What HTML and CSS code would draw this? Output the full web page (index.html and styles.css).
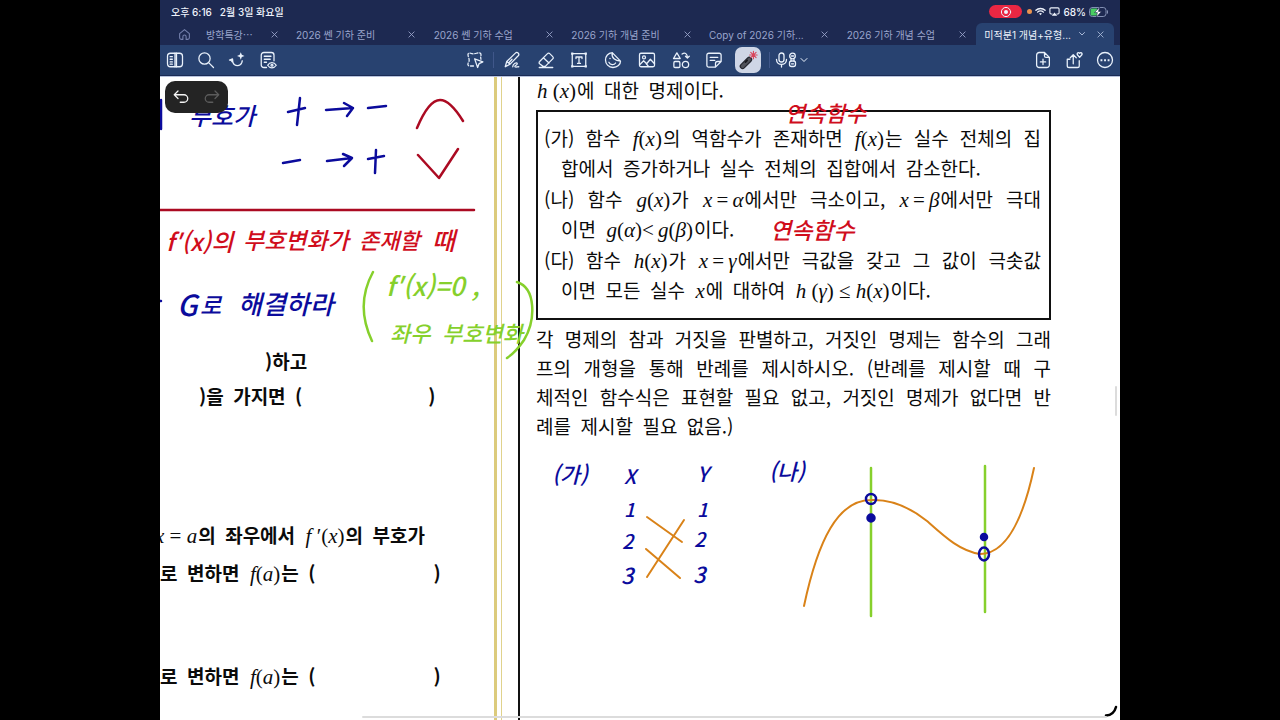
FILE: index.html
```html
<!DOCTYPE html>
<html lang="ko">
<head>
<meta charset="utf-8">
<meta name="viewport" content="width=device-width, initial-scale=1">
<title>미적분1 개념+유형</title>
<link rel="stylesheet" href="styles.css">
</head>
<body>
<div class="device">
  <header class="top">
    <div class="status">
      <span>오후 6:16</span><span>2월 3일 화요일</span>
      <div class="status-right">
        <span class="record"><svg viewBox="0 0 12 12"><circle cx="6" cy="6" r="4.6"/><circle class="solid" cx="6" cy="6" r="2"/></svg></span>
        <span class="mic-dot"></span>
        <svg class="wifi" viewBox="0 0 12 10"><path d="M1 3.6a7.2 7.2 0 0 1 10 0M2.8 5.6a4.6 4.6 0 0 1 6.4 0"/><path class="solid" d="M4.4 7.2a2.4 2.4 0 0 1 3.2 0L6 9z"/></svg>
        <svg class="airplay" viewBox="0 0 12 10"><path d="M3.4 7.6H2.2A1.2 1.2 0 0 1 1 6.400V2.200A1.200 1.200 0 0 1 2.200 1h7.600A1.200 1.200 0 0 1 11 2.200v4.200a1.200 1.200 0 0 1-1.200 1.200H8.600"/><path class="solid" d="M6 6l3 3.500H3z"/></svg>
        <span>68%</span>
        <svg class="battery" viewBox="0 0 20 10"><rect x=".5" y=".5" width="16.500" height="9" rx="2.800"/><path class="charge" d="M3 1.500h5V8.500H3A1.500 1.500 0 0 1 1.500 7V3A1.500 1.500 0 0 1 3 1.500z"/><path d="M18.500 3.800v2.400"/><path class="bolt" d="M10.600 0L5.500 5.600h2.800L7.500 10l5-5.600H9.700z"/></svg>
      </div>
    </div>
    <nav class="tabs">
      <button class="home" aria-label="홈"><svg class="icon" viewBox="0 0 24 24"><path d="M3 10.500L12 3l9 7.500V18a3 3 0 0 1-3 3h-3v-5a3 3 0 0 0-6 0v5H6a3 3 0 0 1-3-3z"/></svg></button>
      <div class="tab first"><a href="#">방학특강⋯</a><button aria-label="닫기"><svg viewBox="0 0 8 8"><path d="M1 1l6 6M7 1L1 7"/></svg></button></div>
      <div class="tab"><a href="#">2026 쎈 기하 준비</a><button aria-label="닫기"><svg viewBox="0 0 8 8"><path d="M1 1l6 6M7 1L1 7"/></svg></button></div>
      <div class="tab"><a href="#">2026 쎈 기하 수업</a><button aria-label="닫기"><svg viewBox="0 0 8 8"><path d="M1 1l6 6M7 1L1 7"/></svg></button></div>
      <div class="tab"><a href="#">2026 기하 개념 준비</a><button aria-label="닫기"><svg viewBox="0 0 8 8"><path d="M1 1l6 6M7 1L1 7"/></svg></button></div>
      <div class="tab"><a href="#">Copy of 2026 기하...</a><button aria-label="닫기"><svg viewBox="0 0 8 8"><path d="M1 1l6 6M7 1L1 7"/></svg></button></div>
      <div class="tab"><a href="#">2026 기하 개념 수업</a><button aria-label="닫기"><svg viewBox="0 0 8 8"><path d="M1 1l6 6M7 1L1 7"/></svg></button></div>
      <div class="tab active"><a href="#">미적분1 개념+유형...</a><svg class="chev" viewBox="0 0 8 8"><path d="M1.500 2.500L4 5l2.500-2.500"/></svg><button aria-label="닫기"><svg viewBox="0 0 8 8"><path d="M1 1l6 6M7 1L1 7"/></svg></button></div>
    </nav>
  </header>

  <div class="toolbar">
    <div class="side">
      <button aria-label="사이드바"><svg class="icon" viewBox="0 0 24 24"><rect x="2" y="3" width="20" height="18" rx="4"/><path d="M12 3v18M5.500 7.500h3M5.500 11h3M5.500 14.500h3M5.500 17.500h3M14 3v18"/></svg></button>
      <button aria-label="검색"><svg class="icon" viewBox="0 0 24 24"><circle cx="10" cy="10" r="7.500"/><path d="M15.500 15.500L22 22"/></svg></button>
      <button aria-label="AI"><svg class="icon" viewBox="0 0 24 24"><path d="M2 12l4-1.500L6.500 15c2 6 10 6 12 0l.5-2M2.500 12c1 0 2.500 1 3 2.500"/><path class="fill" d="M17 1.500l1.400 3.600L22 6.500l-3.600 1.400L17 11.500l-1.400-3.600L12 6.500l3.600-1.400z"/></svg></button>
      <button aria-label="페이지 보기"><svg class="icon" viewBox="0 0 24 24"><path d="M10 22H6.500A3.500 3.500 0 0 1 3 18.500v-13A3.500 3.500 0 0 1 6.500 2h10A3.500 3.500 0 0 1 20 5.500V13M7 7h9M7 11h8M7 15h3"/><path d="M11.500 19c3-4.500 8.500-4.500 11.500 0-3 4.500-8.500 4.500-11.500 0z"/><circle cx="17.300" cy="19" r="1.300"/></svg></button>
    </div>
    <div class="center">
      <button aria-label="선택"><svg class="icon" viewBox="0 0 24 24"><path stroke-dasharray="4 2.500" d="M10 20H5c-3 0-3-3-1.500-5S4 10 3 7s0-5 3-4 5 1 8 0 6-1 6 2-1 3 0 6"/><path d="M11.500 10.500l11 4-5 2.300-2 5.200z"/></svg></button>
      <i class="divider"></i>
      <div class="tools">
        <button aria-label="펜"><svg class="icon" viewBox="0 0 24 24"><path d="M3 21l2-7L16.500 2.800a2.500 2.500 0 0 1 3.800 3.500L9.500 17.500zM5 14l4.500 3.500M7.500 16L12 11M13 21c0-4 6-7 6-4 0 2-4 2-3 4 1 1 3 0 5 0"/></svg></button>
        <button aria-label="지우개"><svg class="icon" viewBox="0 0 24 24"><path d="M3.500 14L14 3.500a2 2 0 0 1 3 0L21 7.500a2 2 0 0 1 0 3L11 20.500H8L3.500 17a2 2 0 0 1 0-3zM8.500 9l7.500 7M3 22h18"/></svg></button>
        <button aria-label="텍스트"><svg class="icon" viewBox="0 0 24 24"><rect x="3" y="3.500" width="18" height="17"/><path d="M8 10V8h8v2M12 8v8.500M10 16.500h4"/><path class="fill" d="M1.500 2h3v3h-3zM19.500 2h3v3h-3zM1.500 19h3v3h-3zM19.500 19h3v3h-3z"/></svg></button>
        <button aria-label="스티커"><svg class="icon" viewBox="0 0 24 24"><path d="M11 2.100C5.500 2.600 2 7 2 12s4 10 10 10 10-4 10-8.500L11 2.100zM11 2.100c-1.500 7 4 11.400 11 11.400M6.500 15c2 4 7 4 9 1"/><circle class="fill" cx="8" cy="10" r="1"/></svg></button>
        <button aria-label="사진"><svg class="icon" viewBox="0 0 24 24"><rect x="2" y="3" width="20" height="18" rx="2"/><circle cx="8" cy="8.500" r="2"/><path d="M2.500 18l5-5 4 4 5-6 5.500 6M11 17l3 3.500"/></svg></button>
        <button aria-label="도형"><svg class="icon" viewBox="0 0 24 24"><path d="M6.500 2.500L11 10H2zM13.500 4c4-3 7 0 7 5M18 7l2.500 2.500L23 7"/><rect x="2.500" y="14" width="8" height="8" rx="1.500"/><circle cx="18" cy="18" r="4.200"/></svg></button>
        <button aria-label="메모"><svg class="icon" viewBox="0 0 24 24"><path d="M5 3h14a2.500 2.500 0 0 1 2.500 2.500V14L14 21.500H5A2.500 2.500 0 0 1 2.500 19V5.500A2.500 2.500 0 0 1 5 3zM21.500 14H16.500a2.500 2.500 0 0 0-2.500 2.500v5M7 8.500h10M7 12.500h6"/></svg></button>
        <button class="on" aria-label="레이저 포인터"><svg class="laser" viewBox="0 0 24 24"><path class="body" d="M5.500 19.500l8-8"/><path class="body-in" d="M5.500 19.500l8-8"/><path class="shine" d="M9 14.500l2-2"/><path class="spark" d="M18.500 1.500v9M14 6h9M15.300 2.800l6.400 6.400M21.700 2.800l-6.400 6.400"/></svg></button>
      </div>
      <i class="divider wide"></i>
      <button class="mic" aria-label="녹음">
        <svg viewBox="0 0 24 16"><rect x="4" y="1" width="5" height="9" rx="2.500"/><path d="M1.500 7.500c0 6.500 10 6.500 10 0M6.500 12.500V15"/><circle cx="17.500" cy="4" r="2.800"/><rect x="14.500" y="9" width="6" height="5.500" rx="2"/><path d="M16 9V7.500M19 9V7.500M16.500 4h2M16.500 11.800h2"/></svg>
        <svg class="chev" viewBox="0 0 8 8"><path d="M1 2.500L4 5.500l3-3"/></svg>
      </button>
    </div>
    <div class="side end">
      <button aria-label="페이지 추가"><svg class="icon" viewBox="0 0 24 24"><path d="M14 2H7a3.500 3.500 0 0 0-3.500 3.500v13A3.500 3.500 0 0 0 7 22h10a3.500 3.500 0 0 0 3.500-3.500V8.500zM14 2v4.500a2 2 0 0 0 2 2h4.500M12 11v7M8.500 14.500h7"/></svg></button>
      <button aria-label="공유"><svg class="icon" viewBox="0 0 24 24"><path d="M6.500 11H3v8.500A2.500 2.500 0 0 0 5.500 22h11a2.500 2.500 0 0 0 2.500-2.500V13M11 17V5.500M7 9l4-4 4 4"/><path d="M19.500 8.500L16.500 5c-1-2 1.500-4 3-2 1.500-2 4 0 3 2z"/></svg></button>
      <button aria-label="더 보기"><svg class="icon" viewBox="0 0 24 24"><circle cx="12" cy="12" r="10"/><path class="fill" d="M6 11h2.500v2.500H6zM10.800 11h2.500v2.500h-2.500zM15.500 11H18v2.500h-2.500z"/></svg></button>
    </div>
  </div>

  <main class="canvas">
    <section class="left">
      <p class="l1">)하고</p>
      <p class="l2">)을&ensp;가지면&ensp;(<span class="blank"></span>)</p>
      <p class="l3"><span class="m"><i>x</i> = <i>a</i></span>의&ensp;좌우에서&ensp;<span class="m"><i>f</i> ′(<i>x</i>)</span>의&ensp;부호가</p>
      <p class="l4">로&ensp;변하면&ensp;<span class="m"><i>f</i>(<i>a</i>)</span>는&ensp;(<span class="blank narrow"></span>)</p>
      <p class="l5">로&ensp;변하면&ensp;<span class="m"><i>f</i>(<i>a</i>)</span>는&ensp;(<span class="blank narrow"></span>)</p>
    </section>
    <div class="gutter"></div>
    <section class="right">
      <p class="lead"><span class="m"><i>h</i> (<i>x</i>)</span>에&ensp;대한&ensp;명제이다.</p>
      <div class="box">
        <div class="item">
          <p class="full">(가) 함수 <span class="m"><i>f</i>(<i>x</i>)</span>의 역함수가 존재하면 <span class="m"><i>f</i>(<i>x</i>)</span>는 실수 전체의 집</p>
          <p class="cont">합에서&ensp;증가하거나&ensp;실수&ensp;전체의&ensp;집합에서&ensp;감소한다.</p>
        </div>
        <div class="item">
          <p class="full">(나) 함수 <span class="m"><i>g</i>(<i>x</i>)</span>가 <span class="m"><i>x</i>&thinsp;=&thinsp;<i>α</i></span>에서만 극소이고, <span class="m"><i>x</i>&thinsp;=&thinsp;<i>β</i></span>에서만 극대</p>
          <p class="cont">이면&ensp;<span class="m"><i>g</i>(<i>α</i>)&lt;&thinsp;<i>g</i>(<i>β</i>)</span>이다.</p>
        </div>
        <div class="item">
          <p class="full">(다) 함수 <span class="m"><i>h</i>(<i>x</i>)</span>가 <span class="m"><i>x</i>&thinsp;=&thinsp;<i>γ</i></span>에서만 극값을 갖고 그 값이 극솟값</p>
          <p class="cont">이면&ensp;모든&ensp;실수&ensp;<span class="m"><i>x</i></span>에&ensp;대하여&ensp;<span class="m"><i>h</i> (<i>γ</i>) ≤ <i>h</i>(<i>x</i>)</span>이다.</p>
        </div>
      </div>
      <div class="ask">
        <p class="full">각 명제의 참과 거짓을 판별하고, 거짓인 명제는 함수의 그래</p>
        <p class="full">프의 개형을 통해 반례를 제시하시오. (반례를 제시할 때 구</p>
        <p class="full">체적인 함수식은 표현할 필요 없고, 거짓인 명제가 없다면 반</p>
        <p>례를&ensp;제시할&ensp;필요&ensp;없음.)</p>
      </div>
    </section>

    <svg class="ink" viewBox="160 76 960 644" preserveAspectRatio="xMinYMin meet">
      <g class="blue">
        <path d="M161 100V129M160 301h1"/>
        <path d="M288 112L305 108M300 98L297 125M326 110L353 108M344 103L353 108L347 116M368 108L386 106"/>
        <path d="M283 163L300 160M327 161L352 158M343 154L352 158L344 166M368 159L384 156M376 150L375 173"/>
        <text x="189" y="125" font-size="24">부호가</text>
        <text x="177" y="316" font-size="29">G</text>
        <text x="200" y="314" font-size="23">로</text>
        <text x="238" y="314" font-size="26">해결하라</text>
        <text x="552" y="483" font-size="22">(가)</text>
        <text x="624" y="484" font-size="20">X</text>
        <text x="697" y="482" font-size="21">Y</text>
        <text x="769" y="480" font-size="22">(나)</text>
        <text x="624" y="517" font-size="19">1</text>
        <text x="622" y="549" font-size="20">2</text>
        <text x="621" y="584" font-size="22">3</text>
        <text x="697" y="517" font-size="19">1</text>
        <text x="694" y="547" font-size="20">2</text>
        <text x="693" y="583" font-size="22">3</text>
      </g>
      <g class="crimson">
        <path d="M160 210H474M417 128C425 109 433 100 440 100S455 108 463 121M418 155L439 178L458 149"/>
      </g>
      <g class="red">
        <text x="166" y="251" font-size="24">f′(x)의</text>
        <text x="243" y="249" font-size="23">부호변화가</text>
        <text x="359" y="249" font-size="22">존재할</text>
        <text x="432" y="250" font-size="25">때</text>
        <text x="785" y="122" font-size="22">연속함수</text>
        <text x="770" y="239" font-size="23">연속함수</text>
      </g>
      <g class="green">
        <path d="M373 272C361 294 361 318 372 341M517 282C536 288 536 320 524 340Q516 352 507 358"/>
        <path class="axis" d="M871 468V616M985 466V612"/>
        <text x="386" y="296" font-size="26">f′(x)=0 ,</text>
        <text x="390" y="342" font-size="22">좌우</text>
        <text x="442" y="342" font-size="22">부호변화</text>
      </g>
      <g class="orange">
        <path d="M804 606C818 540 838 500 871 500C892 499 912 509 927 521C945 537 960 551 980 554C1008 554 1024 515 1034 468"/>
        <path d="M647 517L682 542M646 549L680 578M684 520L647 577"/>
      </g>
      <g class="blue">
        <circle cx="871" cy="499" r="5"/>
        <ellipse cx="984" cy="554" rx="5" ry="6.500"/>
        <circle class="dot" cx="871" cy="518" r="3.500"/>
        <circle class="dot" cx="984" cy="537" r="3"/>
      </g>
      <path class="curl" d="M1106 715.500Q1114 715 1116 707"/>
      <path class="page-end" d="M363 717H1106"/>
      <path class="thumb" d="M1116 387V415"/>
    </svg>

    <div class="history">
      <button aria-label="실행 취소"><svg class="icon" viewBox="0 0 24 24"><path d="M8 4L3 9l5 5M3 9h13a5 5 0 0 1 0 10h-5"/></svg></button>
      <button aria-label="다시 실행" disabled><svg class="icon" viewBox="0 0 24 24"><path d="M16 4l5 5-5 5M21 9H8a5 5 0 0 0 0 10h5"/></svg></button>
    </div>
  </main>
</div>
</body>
</html>
```
FILE: styles.css
```css
* { box-sizing: border-box; }
body {
  margin: 0;
  background: #000;
  font-family: Inter, "Noto Sans CJK KR", sans-serif;
}
p { margin: 0; }
button {
  padding: 0;
  border: 0;
  background: none;
  color: inherit;
  display: grid;
  place-items: center;
}
svg { display: block; fill: none; stroke: currentColor; stroke-linecap: round; stroke-linejoin: round; }
.solid, .fill { fill: currentColor; stroke: none; }

.device {
  width: 75%;
  min-height: 100vh;
  margin: 0 auto;
  display: flex;
  flex-direction: column;
  overflow: hidden;
}

/* status bar and tabs */
.top { background: #1d2951; color: #eef2fb; }
.status {
  display: flex;
  align-items: center;
  gap: 8px;
  height: 23px;
  padding: 0 11px;
  font-size: 10px;
  font-weight: 500;
}
.status-right { margin-left: auto; display: flex; align-items: center; gap: 3px; }
.record { width: 33px; height: 13px; border-radius: 7px; background: #ea2743; display: grid; place-items: center; margin-right: 2px; }
.record svg { width: 12px; }
.mic-dot { width: 5px; height: 5px; border-radius: 50%; background: #ea9350; }
.wifi, .airplay { width: 11px; stroke-width: 1.5; }
.airplay { stroke-width: 1.2; }
.battery { width: 20px; stroke: #8390b4; }
.battery .charge { fill: #49ce62; stroke: none; }
.battery .bolt { fill: #fff; stroke: #1d2951; stroke-width: .6; }

.tabs { display: flex; height: 22px; padding-right: 6px; color: #9aa5cc; }
.home { width: 38px; padding-left: 10px; color: #7480ad; }
.home .icon { width: 13px; stroke-width: 2; }
.tab {
  flex: 1 1 0;
  min-width: 0;
  display: flex;
  align-items: center;
  justify-content: space-between;
  padding: 0 8px;
  font-size: 10px;
}
.tab.first { flex: 0 0 90px; }
.tab a { color: inherit; text-decoration: none; white-space: nowrap; }
.tab button { width: 12px; height: 12px; }
.tab button svg { width: 7px; }
.tab.active { background: #284270; color: #eef2fb; border-radius: 6px 6px 0 0; }
.tab .chev { width: 8px; }
.tab.active button, .tab .chev { color: #a9b9d8; }

/* toolbar */
.toolbar {
  display: flex;
  align-items: center;
  height: 31px;
  padding: 0 2px;
  background: #284270;
  border-bottom: 1px solid #1a2b55;
  color: #e9f1fb;
}
.side { flex: 1; display: flex; gap: 5px; }
.end { justify-content: flex-end; }
.toolbar button { width: 26px; height: 26px; }
.icon { width: 18px; stroke-width: 1.7; }
.center { display: flex; align-items: center; gap: 5px; padding-right: 6px; }
.tools { width: 262px; display: flex; justify-content: space-between; }
.divider { width: 1px; height: 16px; background: #40578a; }
.divider.wide { margin-left: 3px; }
.toolbar .mic { width: 37px; display: flex; align-items: center; gap: 1px; }
.mic svg { width: 24px; stroke-width: 1.3; }
.mic .chev { width: 8px; stroke-width: 1; }
.toolbar .on { background: #cfd6e6; border-radius: 7px; }
.laser { width: 20px; }
.body { stroke: #252730; stroke-width: 7; }
.body-in { stroke: #50525b; stroke-width: 4; }
.shine { stroke: #16171c; stroke-width: 2; }
.spark { stroke: #d9445a; stroke-width: 1.3; }

/* document */
.canvas {
  position: relative;
  flex: 1;
  display: flex;
  background: #fff;
  border-top: 1px solid #b7c3dd;
  color: #0b0b0b;
  font-family: "Noto Sans CJK KR", sans-serif;
  font-size: 19px;
  white-space: nowrap;
}
.m { font-family: "Liberation Serif", serif; font-size: 21px; font-weight: 400; line-height: 1; padding: 0 1px; }
.left { width: 334px; padding-top: 269px; line-height: 30px; font-weight: 700; overflow: hidden; }
.l1 { padding-left: 105px; }
.l2 { padding-left: 39px; margin-top: 5px; }
.l3 { margin: 109px 0 8px -6px; }
.l5 { margin-top: 73px; }
.blank { display: inline-block; width: 126px; }
.blank.narrow { width: 118px; }
.gutter {
  width: 26px;
  border-left: 3px solid #dccb7c;
  border-right: 2px solid #111;
  background: linear-gradient(#e0d28c, #e0d28c) 4px 0 / 1px 100% no-repeat;
}
.right { flex: 1; padding: 0 69px 0 16px; line-height: 30px; }
.lead { height: 33px; line-height: 25px; }
.box { border: 2px solid #111; padding: 11px 8px 13px 6px; display: grid; gap: 1px; }
.item p { height: 30px; }
.full { text-align: justify; text-align-last: justify; }
.cont { padding-left: 17px; }
.ask { padding-top: 4px; line-height: 29px; }
.ask p { height: 29px; }

/* pen strokes over the page */
.ink { position: absolute; left: 0; top: -1px; width: 100%; pointer-events: none; stroke-width: 2; }
.ink text { stroke: none; fill: currentColor; font-style: italic; font-weight: 500; }
.blue { color: #0b0b9c; stroke-width: 2.5; }
.blue .dot { fill: currentColor; }
.crimson { color: #ab0a22; stroke-width: 2.5; }
.red { color: #d00d1c; }
.green { color: #86d02c; stroke-width: 2.5; }
.orange { color: #d98218; }
.curl { color: #000; stroke-width: 2.5; }
.page-end, .thumb { color: #dcdcdc; }

.history {
  position: absolute;
  left: 5px;
  top: 4px;
  display: flex;
  width: 63px;
  height: 32px;
  border-radius: 10px;
  background: #242424;
  color: #f4f4f4;
}
.history button { flex: 1; }
.history button:disabled { color: #5c5c5c; }
```
